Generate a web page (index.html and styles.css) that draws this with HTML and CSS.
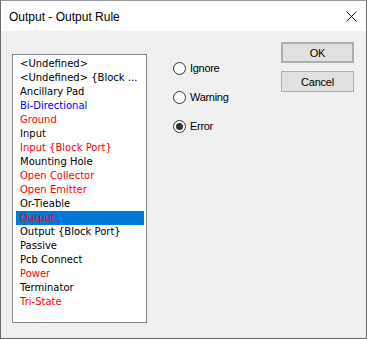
FILE: index.html
```html
<!DOCTYPE html>
<html lang="en">
<head>
  <meta charset="UTF-8">
  <title>Output - Output Rule</title>
  <link rel="stylesheet" href="styles.css">
</head>
<body>
  <div class="dialog">
    <div class="titlebar">
      <span class="title">Output - Output Rule</span>
      <svg class="close" width="11" height="11" viewBox="0 0 11 11">
        <path d="M0.5 0.5 L10.5 10.5 M10.5 0.5 L0.5 10.5" stroke="#111" stroke-width="1" fill="none"/>
      </svg>
    </div>

    <div class="content">
      <ul class="listbox">
        <li>&lt;Undefined&gt;</li>
        <li>&lt;Undefined&gt; {Block ...</li>
        <li>Ancillary Pad</li>
        <li class="blue">Bi-Directional</li>
        <li class="red">Ground</li>
        <li>Input</li>
        <li class="red">Input {Block Port}</li>
        <li>Mounting Hole</li>
        <li class="red">Open Collector</li>
        <li class="red">Open Emitter</li>
        <li>Or-Tieable</li>
        <li class="red selected">Output</li>
        <li>Output {Block Port}</li>
        <li>Passive</li>
        <li>Pcb Connect</li>
        <li class="red">Power</li>
        <li>Terminator</li>
        <li class="red">Tri-State</li>
      </ul>

      <div class="radios">
        <label class="radio-row"><span class="radio"></span>Ignore</label>
        <label class="radio-row"><span class="radio"></span>Warning</label>
        <label class="radio-row"><span class="radio checked"></span>Error</label>
      </div>

      <div class="buttons">
        <button class="btn default">OK</button>
        <button class="btn">Cancel</button>
      </div>
    </div>
  </div>
</body>
</html>
```

FILE: styles.css
```css
body {
  margin: 0;
  font-family: "Liberation Sans", Arial, sans-serif;
  background-color: #f0f0f0;
}

.dialog {
  width: 367px;
  height: 339px;
  box-sizing: border-box;
  border: 1px solid #6a6a6a;
  border-top-color: #9a9a9a;
  background-color: #f0f0f0;
}

.titlebar {
  height: 30px;
  background-color: #fff;
  display: flex;
  align-items: center;
  justify-content: space-between;
  padding: 0 9px 0 8px;
}

.title {
  font-size: 12px;
  color: #000;
  margin-top: 1px;
}

.close {
  margin-top: 1px;
}

.content {
  display: flex;
  align-items: flex-start;
  padding: 11px 0 0 11px;
}

/* list box */
.listbox {
  list-style: none;
  margin: 12px 0 0 0;
  padding: 2px 2px 0 3px;
  width: 135px;
  height: 269px;
  box-sizing: border-box;
  border: 1px solid #828790;
  background-color: #fff;
  font-family: "DejaVu Sans", sans-serif;
  font-size: 10px;
}

.listbox li {
  height: 14px;
  line-height: 14px;
  padding-left: 4px;
  color: #000;
  white-space: nowrap;
  overflow: hidden;
}

.listbox li.red {
  color: #ff0000;
}

.listbox li.blue {
  color: #0000ff;
}

.listbox li.selected {
  background-color: #0078d7;
}

/* radio buttons */
.radios {
  display: flex;
  flex-direction: column;
  gap: 15px;
  margin: 19px 0 0 26px;
  width: 108px;
}

.radio-row {
  display: flex;
  align-items: center;
  height: 14px;
  font-size: 11px;
  letter-spacing: -0.3px;
  color: #000;
}

.radio {
  width: 11px;
  height: 11px;
  border: 1px solid #333;
  border-radius: 50%;
  background-color: #fff;
  margin-right: 4px;
  position: relative;
}

.radio.checked::after {
  content: "";
  position: absolute;
  left: 2px;
  top: 2px;
  width: 7px;
  height: 7px;
  border-radius: 50%;
  background-color: #333;
}

/* buttons */
.buttons {
  display: flex;
  flex-direction: column;
  gap: 8px;
}

.btn {
  width: 73px;
  height: 21px;
  box-sizing: border-box;
  border: 1px solid #adadad;
  background-color: #e1e1e1;
  font-family: "Liberation Sans", Arial, sans-serif;
  font-size: 11px;
  letter-spacing: -0.2px;
  color: #000;
  padding: 0;
}

.btn.default {
  border: 2px solid #adadad;
}
```
